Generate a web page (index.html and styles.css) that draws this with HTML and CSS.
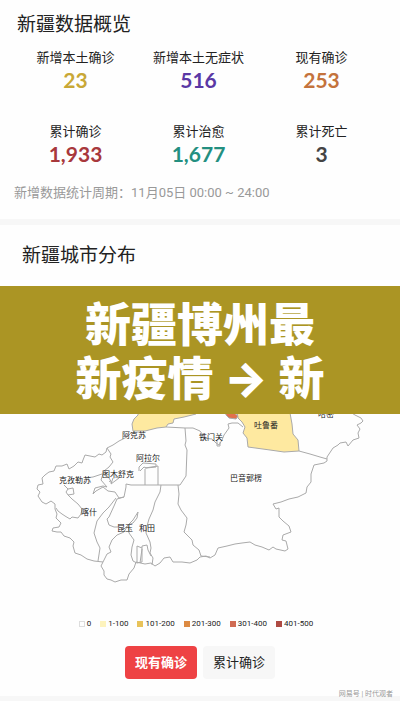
FILE: index.html
```html
<!DOCTYPE html>
<html lang="zh-CN">
<head>
    <meta charset="UTF-8">
    <meta name="viewport" content="width=device-width, initial-scale=1.0">
    <title>新疆数据概览</title>
    <link rel="stylesheet" href="styles.css">
</head>
<body>
    <section class="overview">
        <h2>新疆数据概览</h2>
        <div class="stats">
            <div class="stat">
                <p>新增本土确诊</p>
                <strong class="yellow">23</strong>
            </div>
            <div class="stat">
                <p>新增本土无症状</p>
                <strong class="purple">516</strong>
            </div>
            <div class="stat">
                <p>现有确诊</p>
                <strong class="orange">253</strong>
            </div>
            <div class="stat">
                <p>累计确诊</p>
                <strong class="red">1,933</strong>
            </div>
            <div class="stat">
                <p>累计治愈</p>
                <strong class="green">1,677</strong>
            </div>
            <div class="stat">
                <p>累计死亡</p>
                <strong class="dark">3</strong>
            </div>
        </div>
        <p class="period"><span>新增数据统计周期：</span><span>11月05日 00:00 ~ 24:00</span></p>
    </section>

    <section class="cities">
        <h2>新疆城市分布</h2>
        <div class="map">
            <svg viewBox="0 286 400 320" role="img" aria-label="新疆城市分布">
                <!-- coloured regions -->
                <path class="warm" d="M139 405 L138 415 L134 419 L132 424 L133 431 L145 431 L157 428 L166 427 L168 424 L173 423 L174 419 L184 417 L196 414 L200 405Z"/>
                <path class="warm" d="M236 405 L238 418 L242 422 L245 427 L243 433 L247 438 L248 447 L270 450 L284 452 L299 451 L298 440 L293 434 L292 424 L290 413 L286 405Z"/>
                <path class="hot" d="M224 405 L226 415 L229 418 L236 419 L238 416 L233 412 L232 405Z"/>
                <!-- outer border -->
                <path d="M132 432 L127 437 L119 441 L113 445 L107 448 L106 452 L102 455 L99 454 L95 457 L85 455 L83 460 L82 463 L78 462 L74 466 L69 469 L67 464 L62 466 L56 466 L54 471 L49 472 L45 475 L42 478 L43 484 L38 485 L37 489 L40 492 L38 496 L42 502 L46 504 L51 501 L55 504 L55 509 L57 514 L56 518 L61 523 L59 527 L53 528 L52 531 L57 532 L61 532 L64 536 L70 538 L74 542 L73 546 L75 553 L81 555 L87 559 L94 561 L103 562 L101 566 L104 571 L104 575 L107 579 L111 580 L115 582 L121 580 L127 580 L129 574 L134 568 L136 562 L145 564 L151 563 L155 566 L160 563 L164 558 L170 557 L173 562 L182 562 L190 563 L197 560 L200 557 L206 556 L210 558 L215 555 L218 548 L227 546 L235 544 L242 543 L250 542 L255 545 L262 547 L269 550 L273 547 L276 549 L285 551 L288 549 L286 541 L282 540 L283 535 L291 532 L289 526 L283 521 L279 517 L279 508 L276 509 L273 504 L281 502 L289 499 L298 497 L306 493 L307 487 L311 482 L311 474 L314 465 L324 463 L327 461 L327 457 L333 448 L338 445 L340 443 L346 442 L348 446 L353 440 L359 438 L358 433 L360 429 L357 425 L361 423 L363 421 L361 418 L355 415 L347 410"/>
                <!-- inner borders -->
                <path d="M107 448 L111 454 L110 457 L113 462 L109 467 L104 471 L101 480 L107 487"/>
                <path d="M107 487 L103 486 L95 488 L93 494 L96 491 L103 487 L108 491 L115 492 L119 498 L124 497 L126 487 L126 484 L131 485 L139 485 L161 485 L180 485 L186 476 L187 450 L185 445 L186 441 L185 428 L166 427"/>
                <path d="M185 428 L193 428 L200 431 L203 435 L203 438 L212 439 L216 443 L219 445 L222 440 L224 435 L229 428 L228 424 L232 423 L238 423 L243 427"/>
                <path d="M139 471 L139 467 L143 463 L156 464 L156 467 L146 468 L144 467 L140 471 M145 469 L145 485 M145 468 L158 466 L158 485"/>
                <path d="M299 451 L310 454 L320 457 L327 459"/>
                <path d="M161 485 L160 492 L155 502 L153 510 L149 519 L147 526 L146 533 L150 542 L151 548 L150 553 L153 558 L152 565"/>
                <path d="M178 485 L179 494 L178 504 L181 510 L187 518 L186 525 L184 532 L192 540 L193 545 L199 550 L201 556 L210 557"/>
                <path d="M116 498 L109 507 L103 513 L97 521 L94 533 L97 542 L100 548 L98 561"/>
                <path d="M124 497 L117 499 L114 506 L109 517 L107 519 L109 525 L114 527 L119 527 L124 529 L128 525 L133 520 L138 512 L137 518 L133 523 L128 525 L124 532 L117 535 L112 540 L109 547 L111 552 L107 554 L103 562"/>
                <path d="M128 525 L129 533 L134 540 L132 547 L131 555 L133 561 L137 563 M137 546 L137 563 L142 562 L142 546 L147 545 L148 550 L151 556 M137 546 L142 548 M142 549 L140 563"/>
                <path d="M64 485 L68 489 L73 488 L74 494 L68 495 L66 492 L68 489 M68 495 L72 499 L78 504 L82 509 L81 514 L78 518 L72 517 L70 519 L65 516 L62 514 L58 511 L56 508"/>
                <path d="M85 478 L93 477 L102 474 M109 478 L112 483 L109 481 M113 478 L111 484 L115 481 L119 478 L115 477 M217 441 L217 446 L220 446 L220 442"/>
                <g class="labels">
                    <text x="266" y="428">吐鲁番</text>
                    <text x="326" y="417">哈密</text>
                    <text x="134" y="438">阿克苏</text>
                    <text x="211" y="440">铁门关</text>
                    <text x="148" y="461">阿拉尔</text>
                    <text x="118" y="477">图木舒克</text>
                    <text x="75" y="483">克孜勒苏</text>
                    <text x="89" y="515">喀什</text>
                    <text x="125" y="531">昆玉</text>
                    <text x="147" y="531">和田</text>
                    <text x="246" y="481">巴音郭楞</text>
                </g>
            </svg>
            <h1 class="banner">新疆博州最<br>新疫情 <span class="arrow">→</span> 新</h1>
        </div>

        <ul class="legend">
            <li><i class="c0"></i>0</li>
            <li><i class="c1"></i>1-100</li>
            <li><i class="c2"></i>101-200</li>
            <li><i class="c3"></i>201-300</li>
            <li><i class="c4"></i>301-400</li>
            <li><i class="c5"></i>401-500</li>
        </ul>

        <div class="tabs">
            <button type="button" class="active">现有确诊</button>
            <button type="button">累计确诊</button>
        </div>
        <span class="watermark">网易号 | 时代观者</span>
    </section>
</body>
</html>
```

FILE: styles.css
```css
* {
    margin: 0;
    padding: 0;
    box-sizing: border-box;
}
body {
    background-color: #f7f7f7;
    color: #222;
    font-family: Roboto, 'Noto Sans CJK SC', sans-serif;
    min-height: 100vh;
}
section {
    background-color: #fefefe;
}
h2 {
    font-size: 19px;
    font-weight: 400;
    line-height: 28px;
}

/* overview */
.overview {
    padding: 11px 17px 16px 14px;
    margin-bottom: 6px;
}
.overview h2 {
    padding-left: 3px;
}
.stats {
    display: grid;
    grid-template-columns: repeat(3, 1fr);
    row-gap: 30px;
    margin-top: 9px;
}
.stat {
    text-align: center;
}
.stat p {
    font-size: 13px;
    line-height: 20px;
}
.stat strong {
    display: block;
    font-family: Lato, sans-serif;
    font-size: 21px;
    line-height: 24px;
}
.yellow {
    color: #c9a836;
}
.purple {
    color: #5a38a5;
}
.orange {
    color: #c4733c;
}
.red {
    color: #a8383c;
}
.green {
    color: #238f80;
}
.dark {
    color: #444;
}
.period {
    display: flex;
    margin-top: 17px;
    font-size: 13px;
    line-height: 20px;
    color: #999;
}

/* map */
.cities {
    position: relative;
    padding-bottom: 17px;
}
.cities h2 {
    padding: 17px 22px 16px;
}
.map {
    position: relative;
}
.map svg {
    display: block;
    width: 100%;
}
.map path {
    fill: none;
    stroke: #aaa;
    stroke-width: 1;
    stroke-linejoin: round;
}
.map .warm {
    fill: #fee9a0;
}
.map .hot {
    fill: #e2704a;
}
.labels {
    font-size: 8px;
    text-anchor: middle;
    fill: #222;
}
.banner {
    position: absolute;
    top: 0;
    left: 0;
    width: 100%;
    padding: 8px 0 12px;
    background-color: #ab9524;
    color: #fff;
    font-family: 'Noto Sans CJK SC', sans-serif;
    font-size: 46px;
    font-weight: 900;
    line-height: 54px;
    text-align: center;
}
.arrow {
    font-family: Inter, sans-serif;
    line-height: 1;
}

/* legend and buttons */
.legend {
    display: flex;
    justify-content: center;
    gap: 9px;
    margin-top: 12px;
    padding-right: 8px;
    list-style: none;
    font-size: 8px;
    line-height: 12px;
}
.legend li {
    display: flex;
    align-items: center;
    gap: 2px;
}
.legend i {
    width: 6px;
    height: 6px;
}
.c0 {
    border: 1px solid #ddd;
}
.c1 {
    background-color: #fdf3bd;
}
.c2 {
    background-color: #e8c35a;
}
.c3 {
    background-color: #dc8a42;
}
.c4 {
    background-color: #d06b52;
}
.c5 {
    background-color: #ae4a43;
}
.tabs {
    display: flex;
    justify-content: center;
    gap: 6px;
    margin-top: 16px;
}
.tabs button {
    padding: 6px 10px;
    border: none;
    border-radius: 4px;
    background-color: #f7f7f7;
    color: #222;
    font-family: inherit;
    font-size: 13px;
    line-height: 21px;
    cursor: pointer;
}
.tabs .active {
    background-color: #ee4244;
    color: #fff;
    font-weight: 700;
}
.watermark {
    position: absolute;
    right: 7px;
    bottom: -3px;
    font-size: 7px;
    line-height: 10px;
    color: #999;
}
```
